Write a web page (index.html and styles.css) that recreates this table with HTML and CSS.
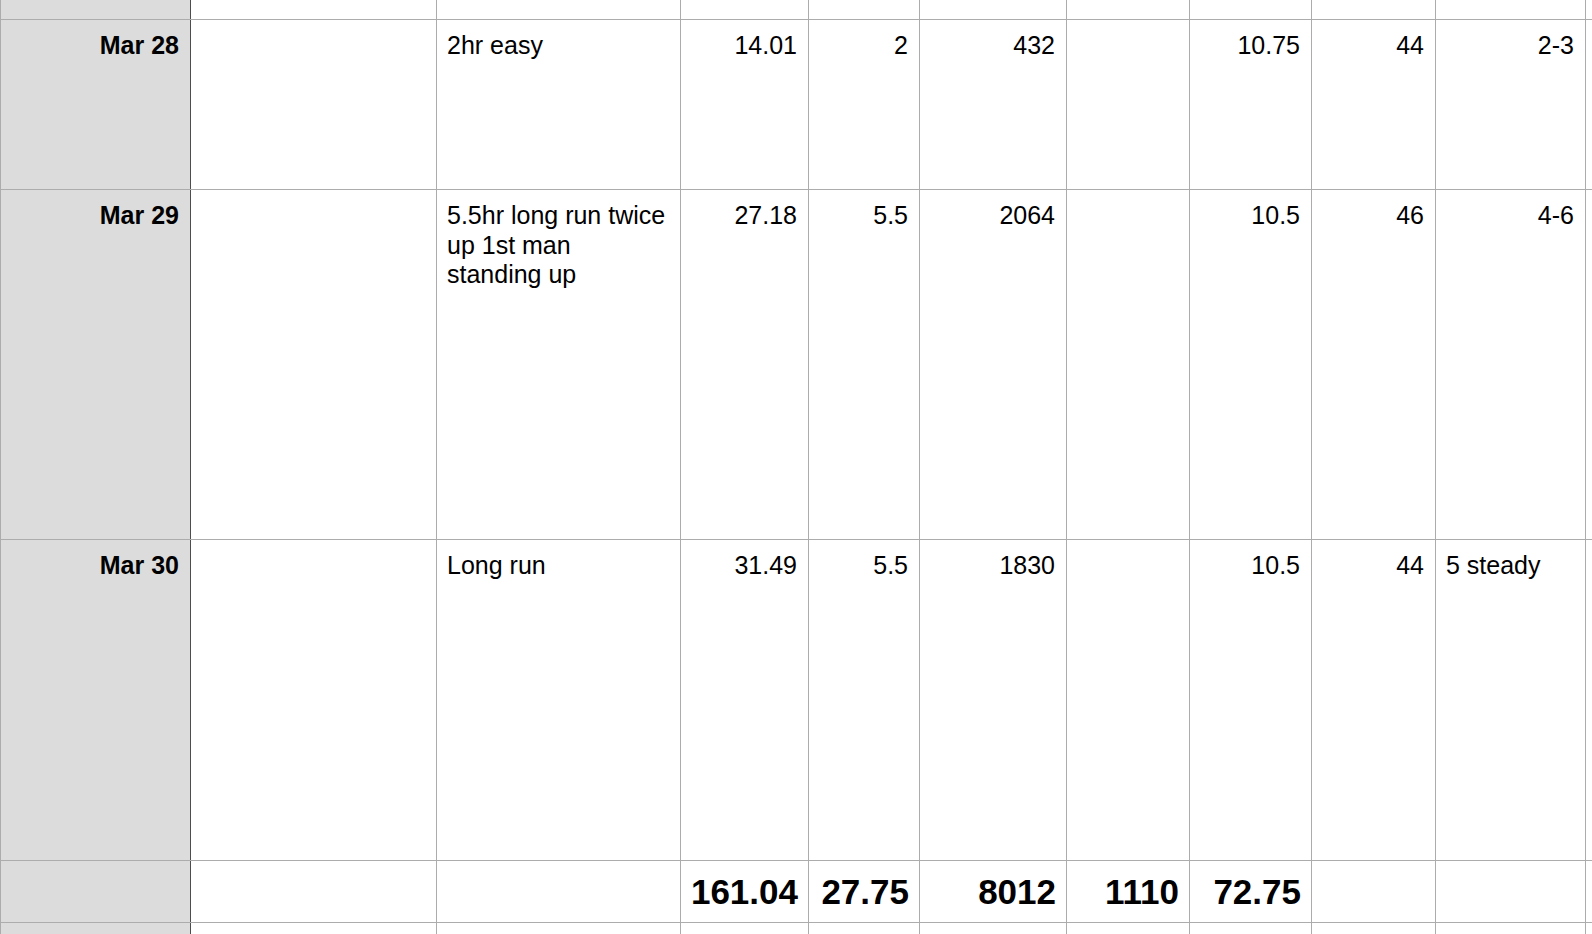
FILE: index.html
```html
<!DOCTYPE html>
<html lang="en">
<head>
<meta charset="utf-8">
<title>Training log</title>
<link rel="stylesheet" href="styles.css">
</head>
<body>
<table class="sheet">
  <colgroup>
    <col class="c-date">
    <col class="c-b">
    <col class="c-desc">
    <col class="c-d">
    <col class="c-e">
    <col class="c-f">
    <col class="c-g">
    <col class="c-h">
    <col class="c-i">
    <col class="c-j">
    <col class="c-k">
  </colgroup>
  <tbody>
    <tr class="r-top">
      <th class="date"></th><td></td><td></td><td></td><td></td><td></td><td></td><td></td><td></td><td></td><td></td>
    </tr>
    <tr class="r-28">
      <th class="date">Mar 28</th>
      <td></td>
      <td class="txt">2hr easy</td>
      <td class="num">14.01</td>
      <td class="num">2</td>
      <td class="num">432</td>
      <td class="num"></td>
      <td class="num">10.75</td>
      <td class="num">44</td>
      <td class="num">2-3</td>
      <td></td>
    </tr>
    <tr class="r-29">
      <th class="date">Mar 29</th>
      <td></td>
      <td class="txt">5.5hr long run twice up 1st man standing up</td>
      <td class="num">27.18</td>
      <td class="num">5.5</td>
      <td class="num">2064</td>
      <td class="num"></td>
      <td class="num">10.5</td>
      <td class="num">46</td>
      <td class="num">4-6</td>
      <td></td>
    </tr>
    <tr class="r-30">
      <th class="date">Mar 30</th>
      <td></td>
      <td class="txt">Long run</td>
      <td class="num">31.49</td>
      <td class="num">5.5</td>
      <td class="num">1830</td>
      <td class="num"></td>
      <td class="num">10.5</td>
      <td class="num">44</td>
      <td class="txt">5 steady</td>
      <td></td>
    </tr>
    <tr class="r-tot">
      <th class="date"></th>
      <td></td>
      <td></td>
      <td class="tot">161.04</td>
      <td class="tot">27.75</td>
      <td class="tot">8012</td>
      <td class="tot">1110</td>
      <td class="tot">72.75</td>
      <td></td>
      <td></td>
      <td></td>
    </tr>
    <tr class="r-end">
      <th class="date"></th><td></td><td></td><td></td><td></td><td></td><td></td><td></td><td></td><td></td><td></td>
    </tr>
  </tbody>
</table>
</body>
</html>
```
FILE: styles.css
```css
html, body {
  margin: 0;
  padding: 0;
  background: #ffffff;
  overflow: hidden;
}

body {
  width: 1592px;
  height: 934px;
  font-family: "Liberation Sans", Arial, Helvetica, sans-serif;
  color: #000;
}

.sheet {
  border-collapse: collapse;
  table-layout: fixed;
  width: 1665px;
  margin-top: -1px;
}

.c-date { width: 190px; }
.c-b { width: 246px; }
.c-desc { width: 244px; }
.c-d { width: 128px; }
.c-e { width: 111px; }
.c-f { width: 147px; }
.c-g { width: 123px; }
.c-h { width: 122px; }
.c-i { width: 124px; }
.c-j { width: 150px; }
.c-k { width: 80px; }

.sheet th,
.sheet td {
  border: 1px solid #acacac;
  padding: 11px 11px 0 10px;
  vertical-align: top;
  font-size: 25px;
  line-height: 29.5px;
  font-weight: normal;
  overflow: hidden;
}

.sheet .date {
  background: #dcdcdc;
  border-right: 1px solid #4d4d4d;
  text-align: right;
  font-weight: bold;
}

.sheet .num {
  text-align: right;
}

.sheet .txt {
  text-align: left;
}

.sheet .tot {
  text-align: right;
  font-weight: bold;
  font-size: 35px;
  line-height: 40px;
  padding-top: 11px;
  padding-right: 10px;
  padding-left: 0;
  overflow: visible;
}

.r-top { height: 20px; }
.r-28 { height: 170px; }
.r-29 { height: 350px; }
.r-30 { height: 321px; }
.r-tot { height: 62px; }
.r-end { height: 40px; }
```
